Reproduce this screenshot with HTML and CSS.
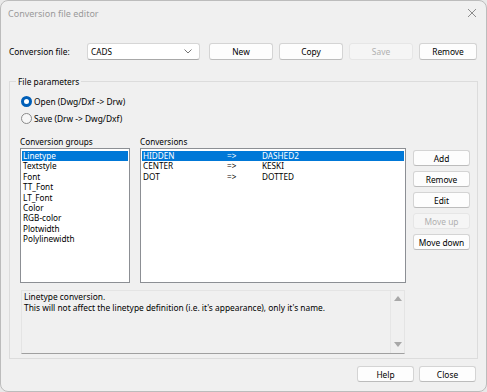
FILE: index.html
```html
<!DOCTYPE html>
<html lang="en">
	<head>
		<meta charset="UTF-8" />
		<title>Conversion file editor</title>
		<link rel="stylesheet" href="styles.css">
	</head>
	<body>
		<div class="window">
			<div class="titlebar">
				<span class="title">Conversion file editor</span>
				<svg class="close" width="10" height="10" viewBox="0 0 10 10">
					<path d="M1 1 L9 9 M9 1 L1 9" stroke="#8c8c8c" stroke-width="1" fill="none" />
				</svg>
			</div>

			<div class="file-row">
				<label class="file-label">Conversion file:</label>
				<div class="combo">
					<span>CADS</span>
					<svg width="8" height="5" viewBox="0 0 8 5">
						<path d="M0.5 0.5 L4 4 L7.5 0.5" stroke="#666" stroke-width="0.9" fill="none" />
					</svg>
				</div>
				<button class="btn">New</button>
				<button class="btn">Copy</button>
				<button class="btn" disabled>Save</button>
				<button class="btn btn-narrow">Remove</button>
			</div>

			<fieldset class="group">
				<legend>File parameters</legend>
				<div class="radios">
					<label class="radio"><span class="dot checked"></span>Open (Dwg/Dxf -&gt; Drw)</label>
					<label class="radio"><span class="dot"></span>Save (Drw -&gt; Dwg/Dxf)</label>
				</div>

				<div class="lists">
					<div class="col-groups">
						<div class="caption">Conversion groups</div>
						<ul class="listbox">
							<li class="selected">Linetype</li>
							<li>Textstyle</li>
							<li>Font</li>
							<li>TT_Font</li>
							<li>LT_Font</li>
							<li>Color</li>
							<li>RGB-color</li>
							<li>Plotwidth</li>
							<li>Polylinewidth</li>
						</ul>
					</div>

					<div class="col-conv">
						<div class="caption">Conversions</div>
						<ul class="listbox conv">
							<li class="selected"><span class="from">HIDDEN</span><span class="arrow">=&gt;</span><span>DASHED2</span></li>
							<li><span class="from">CENTER</span><span class="arrow">=&gt;</span><span>KESKI</span></li>
							<li><span class="from">DOT</span><span class="arrow">=&gt;</span><span>DOTTED</span></li>
						</ul>
					</div>

					<div class="side-buttons">
						<button class="btn">Add</button>
						<button class="btn">Remove</button>
						<button class="btn">Edit</button>
						<button class="btn" disabled>Move up</button>
						<button class="btn">Move down</button>
					</div>
				</div>

				<div class="description">
					<div class="desc-text">
						Linetype conversion.<br />
						This will not affect the linetype definition (i.e. it's appearance), only it's name.
					</div>
					<div class="scrollbar">
						<span class="arrow-up"></span>
						<span class="arrow-down"></span>
					</div>
				</div>
			</fieldset>

			<div class="footer">
				<button class="btn">Help</button>
				<button class="btn">Close</button>
			</div>
		</div>
	</body>
</html>
```

FILE: styles.css
```css
* {
	box-sizing: border-box;
	margin: 0;
	padding: 0;
	font-family: "Noto Sans", "Open Sans", sans-serif;
}

body {
	background-color: #e9e9e9;
	width: 487px;
	height: 392px;
	overflow: hidden;
}

.window {
	width: 487px;
	height: 392px;
	background-color: #f0f0f0;
	border: 1px solid #bcbcbc;
	border-radius: 8px;
	font-size: 8.2px;
	color: #000;
	display: flex;
	flex-direction: column;
}

.titlebar {
	height: 24px;
	display: flex;
	align-items: center;
	justify-content: space-between;
	padding: 0 9px 0 7px;
}

.title {
	color: #9a9a9a;
	font-size: 9px;
}

.file-row {
	display: flex;
	align-items: center;
	margin-top: 18px;
	padding-left: 8px;
	height: 17px;
}

.file-label {
	width: 78px;
	font-size: 8.4px;
}

.combo {
	width: 113px;
	height: 17px;
	background: white;
	border: 1px solid #d6d6d6;
	border-bottom-color: #a8a8a8;
	border-radius: 3px;
	display: flex;
	align-items: center;
	justify-content: space-between;
	padding: 0 7px 0 3px;
	margin-right: 9px;
}

.btn {
	width: 64px;
	height: 17px;
	background: #fdfdfd;
	border: 1px solid #d4d4d4;
	border-bottom-color: #bcbcbc;
	border-radius: 3px;
	font-size: 8.4px;
	color: #000;
	margin-right: 6px;
}

.btn:disabled {
	background: #f5f5f5;
	border-color: #e6e6e6;
	color: #b0b0b0;
}

.btn-narrow {
	width: 58px;
	margin-right: 0;
}

.group {
	margin: 16px 0 0 8px;
	width: 469px;
	border: 1px solid #dcdcdc;
	padding: 0 0 4px 0;
}

.group legend {
	margin-left: 6px;
	padding: 0 2px;
	font-size: 8.4px;
}

.radios {
	padding: 6px 0 0 11px;
}

.radio {
	display: flex;
	align-items: center;
	height: 17px;
	font-size: 8.4px;
}

.dot {
	width: 11px;
	height: 11px;
	border-radius: 50%;
	border: 1px solid #8a8a8a;
	background: #f7f7f7;
	margin-right: 2px;
}

.dot.checked {
	border: 3px solid #005fb8;
	background: white;
}

.lists {
	display: flex;
	padding: 8px 0 0 10px;
}

.caption {
	height: 13px;
	line-height: 13px;
}

.col-groups {
	width: 110px;
	margin-right: 10px;
}

.col-conv {
	width: 266px;
	margin-right: 7px;
}

.listbox {
	list-style: none;
	height: 135px;
	background: white;
	border: 1px solid #8c8f94;
	padding: 2px 1px;
}

.listbox li {
	height: 10.4px;
	line-height: 10.4px;
	padding-left: 1px;
	white-space: nowrap;
}

.listbox li.selected {
	background: #0078d7;
	color: white;
}

.conv li {
	display: flex;
}

.conv .from {
	width: 84px;
}

.conv .arrow {
	width: 35px;
}

.side-buttons {
	display: flex;
	flex-direction: column;
	padding-top: 15px;
}

.side-buttons .btn {
	width: 57px;
	height: 16px;
	margin: 0 0 5px 0;
}

.description {
	display: flex;
	margin: 7px 0 0 11px;
	width: 384px;
	height: 64px;
	border: 1px solid #e4e4e4;
	border-bottom-color: #a0a0a0;
}

.desc-text {
	flex: 1;
	padding: 0 2px;
	line-height: 11px;
	font-size: 8.4px;
}

.scrollbar {
	width: 14px;
	border-left: 1px solid #e6e6e6;
	display: flex;
	flex-direction: column;
	justify-content: space-between;
	align-items: center;
	padding: 5px 0 6px;
}

.arrow-up {
	border: 4px solid transparent;
	border-bottom: 5px solid #a8a8a8;
	border-top: none;
}

.arrow-down {
	border: 4px solid transparent;
	border-top: 5px solid #a8a8a8;
	border-bottom: none;
}

.footer {
	display: flex;
	justify-content: flex-end;
	margin-top: 7px;
	padding-right: 10px;
}

.footer .btn {
	width: 57px;
	height: 16px;
	margin: 0 0 0 5px;
}
```
